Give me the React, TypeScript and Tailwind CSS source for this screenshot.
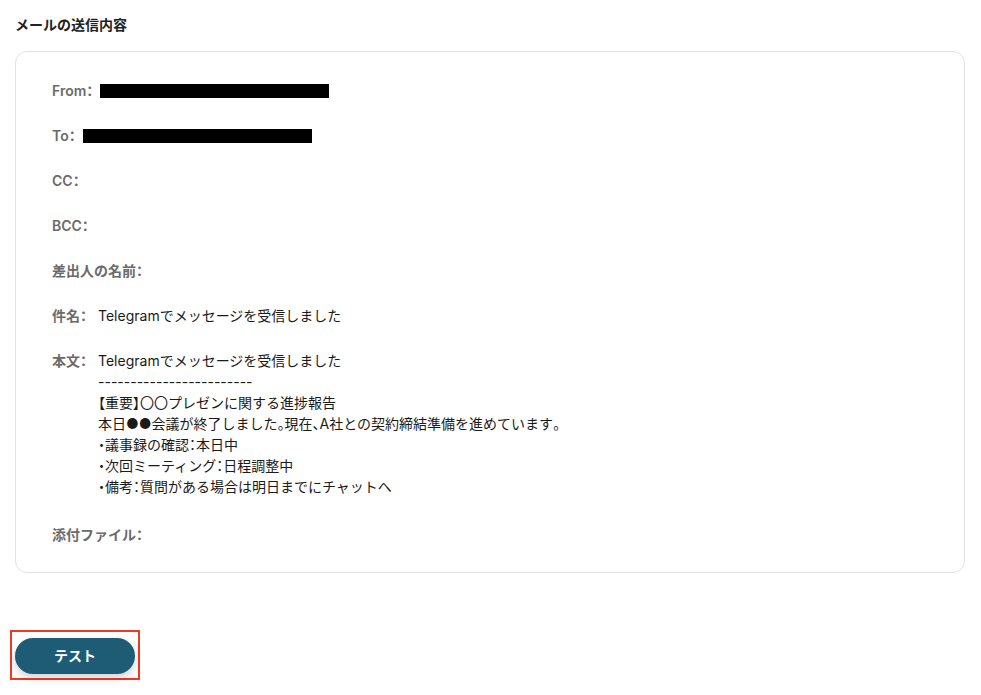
const FONT = { fontFamily: 'Inter, "Noto Sans CJK JP", "Noto Sans", sans-serif' }

const BODY_LINES = [
  'Telegramでメッセージを受信しました',
  '------------------------',
  '【重要】〇〇プレゼンに関する進捗報告',
  '本日●●会議が終了しました。現在、A社との契約締結準備を進めています。',
  '・議事録の確認：本日中',
  '・次回ミーティング：日程調整中',
  '・備考：質問がある場合は明日までにチャットへ',
]

// full-width punctuation is set proportionally, kana stay full width
function Jp({ text }: { text: string }) {
  return (
    <>
      {text.split(/([、。：・【】])/).map((part, i) =>
        i % 2 === 1 ? (
          <span key={i} className="[font-feature-settings:'palt']">
            {part}
          </span>
        ) : (
          part
        ),
      )}
    </>
  )
}

function Row({ label, children }: { label: string; children?: React.ReactNode }) {
  return (
    <div className="flex items-start text-sm leading-[21px]">
      <span className="font-semibold text-[#6b6b6b] whitespace-nowrap">
        <Jp text={`${label}：`} />
      </span>
      {children}
    </div>
  )
}

function Redacted() {
  return (
    <div className="ml-[7px] flex h-[21px] items-center">
      <span className="block h-[14px] w-[229px] bg-black" />
    </div>
  )
}

export default function App() {
  return (
    <div className="min-h-[695px] bg-white px-[15px] pt-[14px]" style={FONT}>
      <h2 className="text-sm font-bold leading-[21px] text-[#222]">メールの送信内容</h2>

      <div className="mt-4 flex w-[950px] flex-col gap-6 rounded-xl border border-[#e1e1e1] px-9 pt-[28px] pb-[27px]">
        <Row label="From">
          <Redacted />
        </Row>
        <Row label="To">
          <Redacted />
        </Row>
        <Row label="CC" />
        <Row label="BCC" />
        <Row label="差出人の名前" />
        <Row label="件名">
          <span className="ml-[11px] text-[#1a1a1a]">Telegramでメッセージを受信しました</span>
        </Row>
        <div className="mb-[3px]">
          <Row label="本文">
            <div className="ml-[11px] flex flex-col text-[#1a1a1a]">
              {BODY_LINES.map((line, i) => (
                <span key={i}>
                  <Jp text={line} />
                </span>
              ))}
            </div>
          </Row>
        </div>
        <Row label="添付ファイル" />
      </div>

      <div className="mt-[57px] -ml-[5px] inline-flex border-2 border-[#ee3a24] px-[3px] pt-[6px] pb-[4px]">
        <button className="flex h-9 w-[120px] items-center justify-center rounded-full bg-[#1e5b75] text-sm font-bold text-white shadow-[0_4px_10px_rgba(0,0,0,0.18)]">
          テスト
        </button>
      </div>
    </div>
  )
}
